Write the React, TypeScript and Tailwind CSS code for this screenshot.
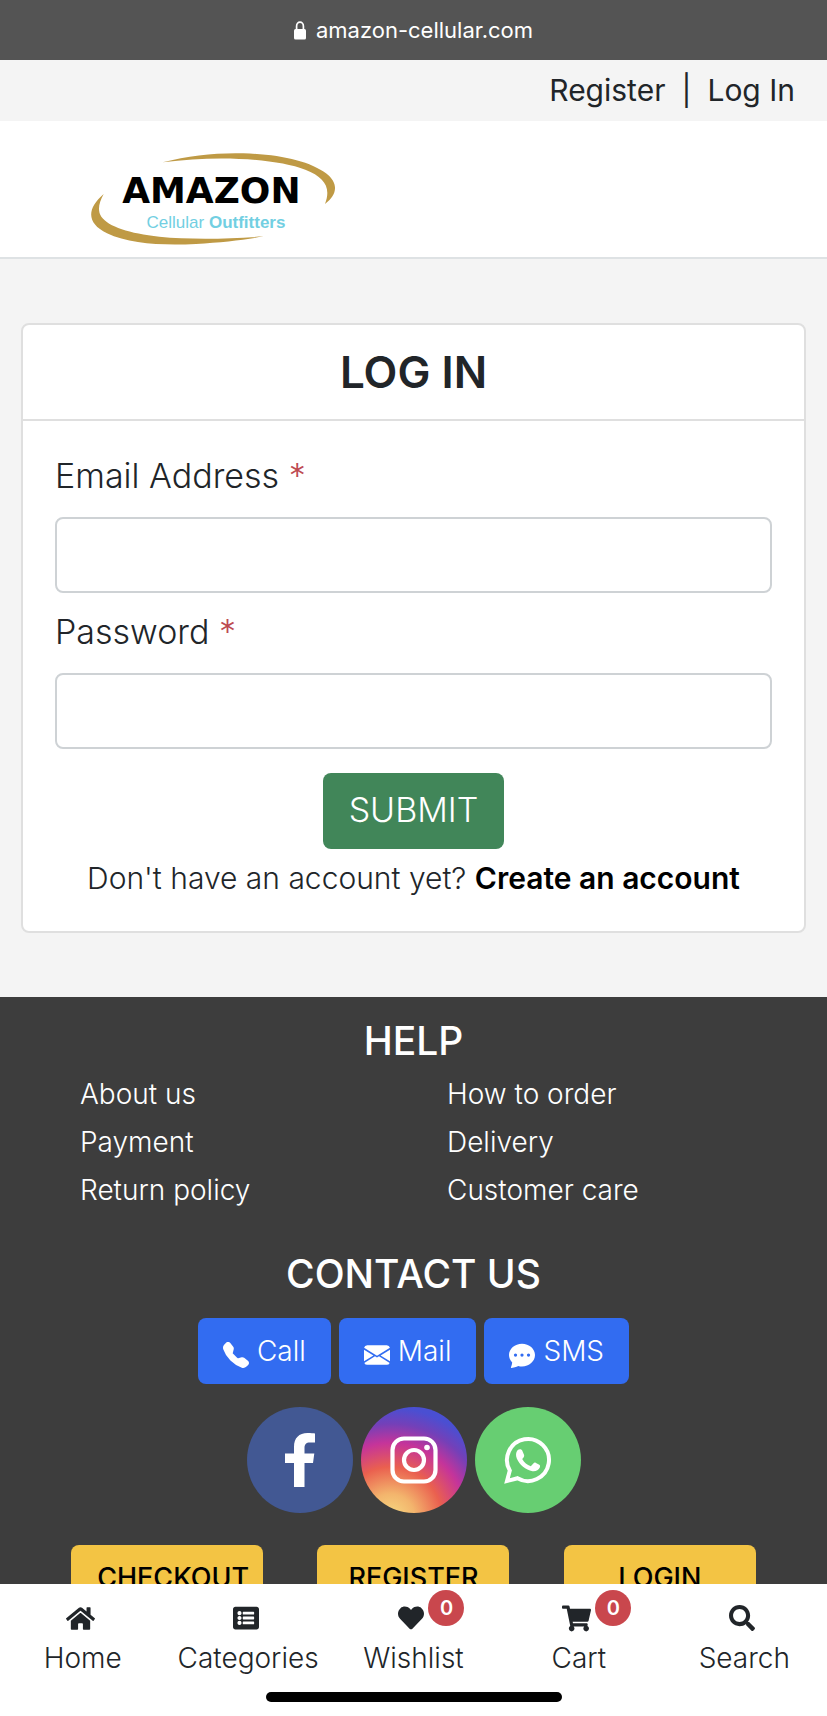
import type { ReactNode } from "react";
import { BsChatDotsFill, BsEnvelopeFill, BsTelephoneFill } from "react-icons/bs";
import { FaHeart, FaHome, FaListAlt, FaSearch, FaShoppingCart } from "react-icons/fa";

const helpLinks = [
  "About us",
  "How to order",
  "Payment",
  "Delivery",
  "Return policy",
  "Customer care",
];

function Logo() {
  return (
    <svg className="h-[115px] w-[270px]" viewBox="0 0 810 345" role="img" aria-label="Amazon Cellular Outfitters">
      <g fill="#bf9a45">
        <path d="M248 67C328 46 410 38 490 40C600 43 690 64 738 100C777 130 772 164 735 192C754 142 734 112 676 89C590 57 420 44 248 67Z" />
        <path d="M71 162C20 206 19 250 81 280C148 312 248 317 348 312C428 307 498 299 551 289C448 297 328 299 238 290C148 280 86 260 64 230C52 211 56 190 71 162Z" />
      </g>
      <text x="394" y="189" textAnchor="middle" fill="#000" fontSize="108" fontWeight="700" fontFamily="DejaVu Sans, sans-serif">
        AMAZON
      </text>
      <text x="408" y="263" textAnchor="middle" fill="#72cfe2" fontSize="51" fontFamily="Liberation Sans, sans-serif">
        Cellular <tspan fontWeight="700">Outfitters</tspan>
      </text>
    </svg>
  );
}

function LockGlyph() {
  return (
    <svg className="h-[19px] w-3" viewBox="0 0 12 19" aria-hidden="true">
      <path d="M2.600 9V5.200a3.400 4 0 0 1 6.800 0V9" fill="none" stroke="#fff" strokeWidth="1.700" />
      <rect x="0" y="8" width="12" height="10.500" rx="1.500" fill="#fff" />
    </svg>
  );
}

function FacebookGlyph() {
  return (
    <svg className="h-[54px] w-[30px]" viewBox="0 0 30 54" fill="#fff" aria-hidden="true">
      <path d="M9 54V30H0V20.500H9V14C9 5 14 0 22.500 0C26 0 28.500 .2 30 .5V9.500H25C21 9.500 19.500 11.500 19.500 15V20.500H29.300L28 30H19.500V54Z" />
    </svg>
  );
}

function InstagramGlyph() {
  return (
    <svg className="size-12" viewBox="0 0 48 48" fill="none" stroke="#fff" strokeWidth="4.200" aria-hidden="true">
      <rect x="2.500" y="2.500" width="43" height="43" rx="11.500" />
      <circle cx="24" cy="24" r="10" />
      <circle cx="37" cy="11.500" r="2.800" fill="#fff" stroke="none" />
    </svg>
  );
}

function WhatsappGlyph() {
  return (
    <svg className="size-12" viewBox="0 0 48 48" aria-hidden="true">
      <path
        d="M3 45L5.800 34.500A21 21 0 1 1 13.500 42.200Z"
        fill="none"
        stroke="#fff"
        strokeWidth="4"
      />
      <path
        d="M13.500 14.300C14.800 12.800 17.300 12.700 18.100 14.300L20.100 19C20.500 20.200 19.600 21.500 18.200 23C20.300 26.500 23 28.900 26.800 30.300L29.600 27.200C30.300 26.400 31 26.500 32 26.900L35.300 28.700C36.200 29.200 36.200 30.200 35.800 31.500C34.700 34.200 31.500 35.700 28.500 35.200C21.500 33.900 15.500 28.800 12.800 22.500C11.600 19.500 11.800 16.400 13.500 14.300Z"
        fill="#fff"
      />
    </svg>
  );
}

function Field({ id, label, type }: { id: string; label: string; type: string }) {
  return (
    <div className="flex flex-col gap-[18px]">
      <label htmlFor={id} className="text-[34px] leading-[46px] font-light">
        {label} <span className="text-[#bd4a52]">*</span>
      </label>
      <input
        id={id}
        type={type}
        className="h-[76px] w-full rounded-lg border-2 border-[#ced2d5] bg-white px-6 text-[34px] outline-none focus:border-blue-400"
      />
    </div>
  );
}

function ContactButton({ icon, label, href }: { icon: ReactNode; label: string; href: string }) {
  return (
    <a
      href={href}
      className="flex h-[66px] items-center gap-2 rounded-lg bg-[#326cf1] px-[25px] text-[28px] font-light text-white"
    >
      <span className="pt-2">{icon}</span>
      {label}
    </a>
  );
}

function NavItem({ icon, label, badge }: { icon: ReactNode; label: string; badge?: number }) {
  return (
    <a href="#" className="flex flex-col items-center">
      <span className="relative mr-1 flex h-8 items-center">
        {icon}
        {badge !== undefined && (
          <span className="absolute -top-3 left-full ml-1 flex size-9 items-center justify-center rounded-full bg-[#c9474d] text-xl leading-none font-semibold text-white">
            {badge}
          </span>
        )}
      </span>
      <span className="mt-1 text-[28px] leading-10 font-light">{label}</span>
    </a>
  );
}

export default function App() {
  return (
    <div className="flex min-h-screen flex-col bg-[#f4f4f4] font-['Inter',sans-serif] text-[#212529]">
      <div className="flex h-[60px] items-center justify-center gap-2.5 bg-[#545454] text-[22px] text-white">
        <LockGlyph />
        amazon-cellular.com
      </div>

      <div className="flex h-[61px] items-center justify-end gap-4 px-8 text-[30px]">
        <a href="#">Register</a>
        <span>|</span>
        <a href="#">Log In</a>
      </div>

      <header className="h-[138px] border-b-2 border-[#dee2e4] bg-white pt-[19px] pl-20">
        <a href="#" className="inline-block">
          <Logo />
        </a>
      </header>

      <main className="px-[21px] py-16">
        <section className="rounded-lg border-2 border-[#dfdfdf] bg-white">
          <h1 className="border-b-2 border-[#dfdfdf] py-[21px] text-center text-[44px] leading-[52px] font-semibold">
            LOG IN
          </h1>
          <form className="flex flex-col p-8" onSubmit={(e) => e.preventDefault()}>
            <div className="flex flex-col gap-4">
              <Field id="email" label="Email Address" type="email" />
              <Field id="password" label="Password" type="password" />
            </div>
            <button
              type="submit"
              className="mt-6 h-[76px] self-center rounded-lg bg-[#418659] px-[26px] pb-1 text-[34px] font-light text-white"
            >
              SUBMIT
            </button>
            <p className="mt-2 text-center text-[30px] leading-[42px] font-light">
              Don&apos;t have an account yet?{" "}
              <a href="#" className="font-semibold text-black">
                Create an account
              </a>
            </p>
          </form>
        </section>
      </main>

      <footer className="flex-1 bg-[#3d3d3d] pt-5 text-white">
        <h2 className="text-center text-[39px] leading-[48px] font-medium">HELP</h2>
        <ul className="grid grid-cols-2 pt-[5px] pr-[13px] pl-20 text-[28px] leading-[48px] font-light">
          {helpLinks.map((link) => (
            <li key={link}>
              <a href="#">{link}</a>
            </li>
          ))}
        </ul>

        <h2 className="mt-9 text-center text-[39px] leading-[48px] font-medium">CONTACT US</h2>
        <div className="mt-5 flex justify-center gap-2">
          <ContactButton href="tel:" label="Call" icon={<BsTelephoneFill className="size-[26px]" />} />
          <ContactButton href="mailto:" label="Mail" icon={<BsEnvelopeFill className="size-[26px]" />} />
          <ContactButton href="sms:" label="SMS" icon={<BsChatDotsFill className="size-[26px]" />} />
        </div>
        <div className="mt-[23px] flex justify-center gap-2">
          <a href="#" aria-label="Facebook" className="flex size-[106px] items-center justify-center rounded-full bg-[#425893]">
            <FacebookGlyph />
          </a>
          <a
            href="#"
            aria-label="Instagram"
            className="flex size-[106px] items-center justify-center rounded-full bg-[radial-gradient(circle_at_28%_105%,#f7dc83_0%,#f3b56d_18%,#ea604f_38%,#c5349a_56%,#7440b8_70%,#4a4fd2_82%)]"
          >
            <InstagramGlyph />
          </a>
          <a href="#" aria-label="WhatsApp" className="flex size-[106px] items-center justify-center rounded-full bg-[#67ce72]">
            <WhatsappGlyph />
          </a>
        </div>
        <div className="mt-8 grid grid-cols-3 justify-items-center px-11">
          {["CHECKOUT", "REGISTER", "LOGIN"].map((label) => (
            <button
              key={label}
              type="button"
              className="h-16 w-48 rounded-lg bg-[#f3c444] px-[26px] text-[27px] leading-none font-medium whitespace-nowrap text-black"
            >
              {label}
            </button>
          ))}
        </div>
      </footer>

      <nav className="fixed inset-x-0 bottom-0 flex h-[132px] flex-col items-center justify-between bg-white pt-[18px] pb-3.5">
        <div className="grid w-full grid-cols-5">
          <NavItem label="Home" icon={<FaHome className="size-[29px]" />} />
          <NavItem label="Categories" icon={<FaListAlt className="size-[26px]" />} />
          <NavItem label="Wishlist" badge={0} icon={<FaHeart className="size-[26px]" />} />
          <NavItem label="Cart" badge={0} icon={<FaShoppingCart className="size-[29px]" />} />
          <NavItem label="Search" icon={<FaSearch className="size-[26px]" />} />
        </div>
        <div className="h-2.5 w-[296px] rounded-full bg-black" />
      </nav>
    </div>
  );
}
